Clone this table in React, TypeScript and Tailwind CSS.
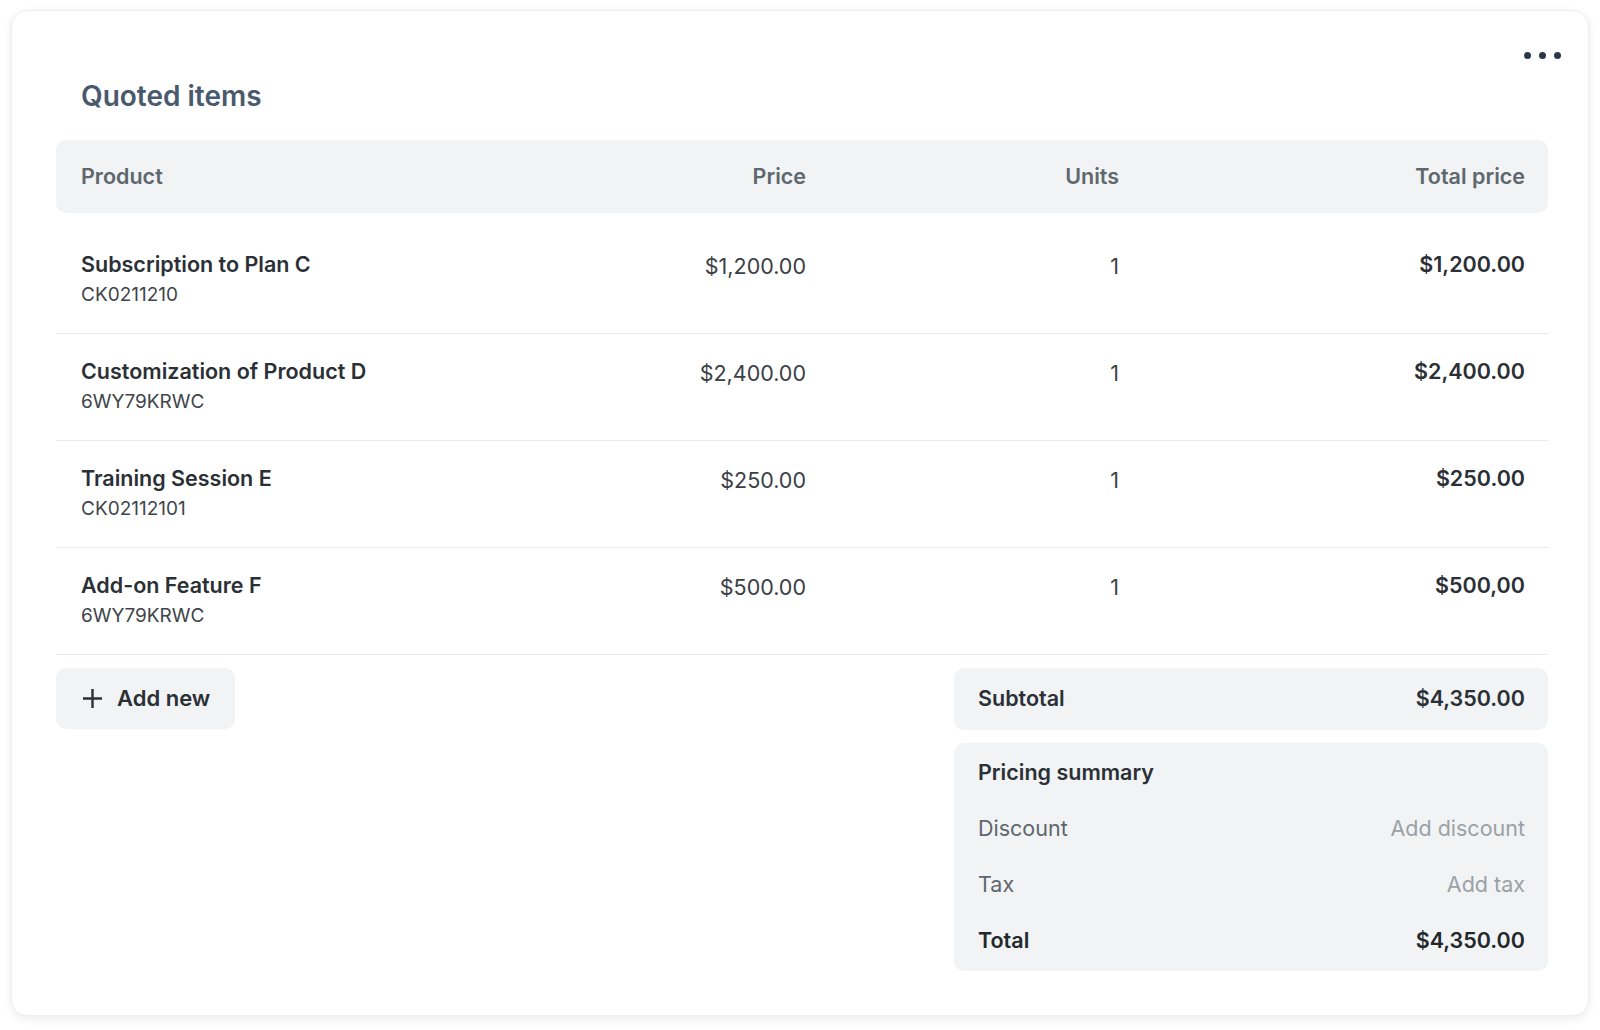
import React from 'react';

interface QuoteItem {
  name: string;
  code: string;
  price: string;
  units: number;
  total: string;
}

const items: QuoteItem[] = [
  { name: 'Subscription to Plan C', code: 'CK0211210', price: '$1,200.00', units: 1, total: '$1,200.00' },
  { name: 'Customization of Product D', code: '6WY79KRWC', price: '$2,400.00', units: 1, total: '$2,400.00' },
  { name: 'Training Session E', code: 'CK02112101', price: '$250.00', units: 1, total: '$250.00' },
  { name: 'Add-on Feature F', code: '6WY79KRWC', price: '$500.00', units: 1, total: '$500,00' },
];

const cols = 'grid grid-cols-[525px_200px_313px_406px]';

const App: React.FC = () => {
  return (
    <div className="min-h-screen bg-white font-['Inter','Liberation_Sans',sans-serif]">
      <div className="pt-[10px] pl-[11px]">
        <div className="relative w-[1578px] h-[1006px] rounded-2xl bg-white border border-[#eceff1] shadow-[0_3px_10px_rgba(0,0,0,0.08)] pl-[44px] pr-[40px] pt-[67px]">
          {/* menu dots */}
          <button className="absolute top-[37px] right-[23px] flex gap-[8px] p-1" aria-label="More">
            <span className="w-[7px] h-[7px] rounded-full bg-[#2c3848]" />
            <span className="w-[7px] h-[7px] rounded-full bg-[#2c3848]" />
            <span className="w-[7px] h-[7px] rounded-full bg-[#2c3848]" />
          </button>

          <h2 className="text-[28px] leading-9 font-semibold text-[#4a5a6e] pl-[25px]">Quoted items</h2>

          {/* table header */}
          <div className={`${cols} mt-[26px] h-[73px] items-center rounded-[10px] bg-[#f1f3f4] pl-[25px] pr-[23px] text-[21.5px] font-semibold text-[#5e676e]`}>
            <div>Product</div>
            <div className="text-right">Price</div>
            <div className="text-right">Units</div>
            <div className="text-right">Total price</div>
          </div>

          {/* rows */}
          <div className="mt-[14px]">
            {items.map((item) => (
              <div
                key={item.name}
                className={`${cols} items-start border-b border-[#e8eaec] pl-[25px] pr-[23px] pt-[23px] pb-[25px]`}
              >
                <div>
                  <div className="text-[21.5px] leading-7 font-semibold text-[#2b3036]">{item.name}</div>
                  <div className="mt-[4px] text-[19px] leading-[26px] text-[#3f454b]">{item.code}</div>
                </div>
                <div className="pt-[2px] text-right text-[21.5px] leading-7 text-[#3b4046]">{item.price}</div>
                <div className="pt-[2px] text-right text-[21.5px] leading-7 text-[#3b4046]">{item.units}</div>
                <div className="text-right text-[21.5px] leading-7 font-semibold text-[#2b3036]">{item.total}</div>
              </div>
            ))}
          </div>

          {/* footer */}
          <div className="mt-[13px] flex items-start justify-between">
            <button className="flex h-[61px] items-center gap-[14px] rounded-[10px] bg-[#f1f3f4] pl-[26px] pr-[25px] text-[22px] font-semibold text-[#2b3036]">
              <svg width="21" height="21" viewBox="0 0 21 21" fill="none" stroke="#2b3036" strokeWidth="2.4">
                <path d="M10.5 1v19M1 10.5h19" />
              </svg>
              Add new
            </button>

            <div className="w-[594px] flex flex-col gap-[13px]">
              <div className="flex h-[62px] items-center justify-between rounded-[10px] bg-[#f1f3f4] pl-6 pr-[23px] pb-[2px] text-[21.5px] font-semibold text-[#2b3036]">
                <span>Subtotal</span>
                <span>$4,350.00</span>
              </div>
              <div className="flex flex-col gap-7 rounded-[10px] bg-[#f1f3f4] pl-6 pr-[23px] pt-[15px] pb-[17px] text-[21.5px] leading-7">
                <div className="font-semibold text-[#2b3036]">Pricing summary</div>
                <div className="flex justify-between">
                  <span className="text-[#5f666c]">Discount</span>
                  <span className="text-[#9ba1a6]">Add discount</span>
                </div>
                <div className="flex justify-between">
                  <span className="text-[#5f666c]">Tax</span>
                  <span className="text-[#9ba1a6]">Add tax</span>
                </div>
                <div className="flex justify-between font-semibold text-[#23282c]">
                  <span>Total</span>
                  <span>$4,350.00</span>
                </div>
              </div>
            </div>
          </div>
        </div>
      </div>
    </div>
  );
};

export default App;
